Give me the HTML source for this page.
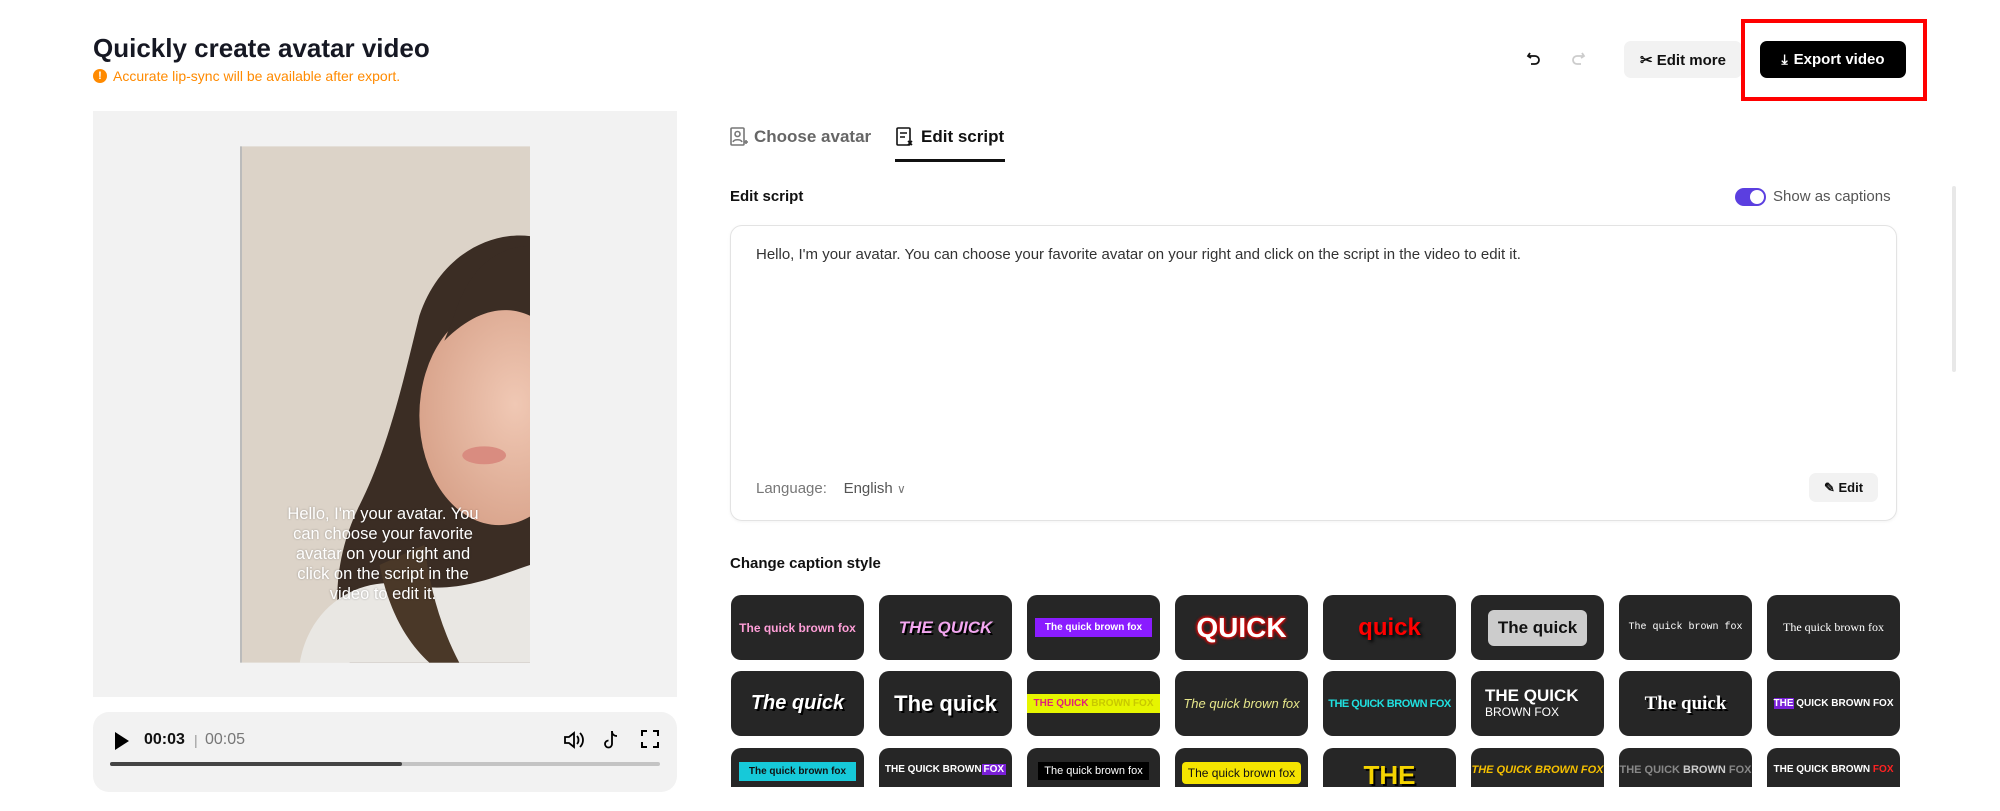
<!DOCTYPE html>
<html><head><meta charset="utf-8"><style>
*{box-sizing:border-box;margin:0;padding:0}
body{width:2000px;height:811px;background:#fff;font-family:"Liberation Sans",sans-serif;color:#111;position:relative;overflow:hidden}
.a{position:absolute}
.tile{position:absolute;width:133px;height:65px;background:#262626;border-radius:10px;display:flex;align-items:center;justify-content:center;color:#fff;font-weight:bold;overflow:hidden;white-space:nowrap}
</style></head><body>
<div class="a" style="left:93px;top:33px;font-size:26px;font-weight:bold;color:#161823">Quickly create avatar video</div>
<div class="a" style="left:93px;top:68px;font-size:14px;color:#ff8a00;display:flex;align-items:center;gap:6px"><span style="width:14px;height:14px;border-radius:50%;background:#ff8a00;color:#fff;font-size:11px;text-align:center;line-height:14px;font-weight:bold">!</span>Accurate lip-sync will be available after export.</div>

<!-- top buttons -->
<svg class="a" style="left:1525px;top:50px" width="18" height="18" viewBox="0 0 18 18" fill="none" stroke="#111" stroke-width="1.8"><path d="M5 3L3 6l3 2"/><path d="M3 6h7a4 4 0 010 8H6"/></svg>
<svg class="a" style="left:1569px;top:50px" width="18" height="18" viewBox="0 0 18 18" fill="none" stroke="#ccc" stroke-width="1.8"><path d="M13 3l2 3-3 2"/><path d="M15 6H8a4 4 0 000 8h4"/></svg>
<div class="a" style="left:1624px;top:41px;width:118px;height:37px;background:#f2f2f2;border-radius:7px;font-size:15px;font-weight:bold;display:flex;align-items:center;justify-content:center;gap:5px">✂ Edit more</div>
<div class="a" style="left:1760px;top:41px;width:146px;height:37px;background:#000;color:#fff;border-radius:7px;font-size:15px;font-weight:bold;display:flex;align-items:center;justify-content:center;gap:6px"><span style="font-size:14px">⤓</span>Export video</div>
<div class="a" style="left:1741px;top:19px;width:186px;height:82px;border:4px solid #f00"></div>

<!-- preview -->
<div class="a" style="left:93px;top:111px;width:584px;height:586px;background:#f2f2f2"></div>
<svg class="a" style="left:240px;top:146px" width="290" height="517" viewBox="0 0 291 518">
<defs><radialGradient id="f" cx="0.6" cy="0.45" r="0.6"><stop offset="0" stop-color="#f0c8b4"/><stop offset="1" stop-color="#d9a48c"/></radialGradient></defs>
<rect width="291" height="518" fill="#dcd3c8"/>
<path d="M291 90 C250 85 200 110 180 170 C165 230 150 300 120 360 C95 410 90 470 110 518 L291 518Z" fill="#3b2d24"/>
<ellipse cx="260" cy="270" rx="80" ry="110" fill="url(#f)"/>
<path d="M291 100 C260 100 230 120 215 170 L205 195 C240 160 270 160 291 170Z" fill="#3b2d24"/>
<ellipse cx="245" cy="310" rx="22" ry="9" fill="#d98c80"/>
<path d="M60 518 C70 460 120 430 170 440 C220 450 260 430 291 420 L291 518Z" fill="#e9e7e3"/>
<path d="M140 420 C150 470 170 500 190 518 L220 518 C200 480 190 440 185 400Z" fill="#4a3828"/>
<rect x="0" y="0" width="2" height="518" fill="#bbb"/>
</svg>
<div class="a" style="left:280px;top:504px;width:206px;text-align:center;color:#fff;font-size:16.5px;line-height:20px;text-shadow:0 0 2px rgba(0,0,0,.3)">Hello, I'm your avatar. You can choose your favorite avatar on your right and click on the script in the video to edit it.</div>

<!-- player -->
<div class="a" style="left:93px;top:712px;width:584px;height:80px;background:#f2f2f2;border-radius:16px"></div>
<svg class="a" style="left:113px;top:731px" width="18" height="20"><path d="M2 1L16 10 2 19Z" fill="#000"/></svg>
<div class="a" style="left:144px;top:731px;font-size:16px;font-weight:bold">00:03</div>
<div class="a" style="left:194px;top:732px;font-size:14px;color:#999">|</div>
<div class="a" style="left:205px;top:731px;font-size:16px;color:#777">00:05</div>
<svg class="a" style="left:562px;top:729px" width="22" height="22" viewBox="0 0 22 22" fill="none" stroke="#000" stroke-width="1.8"><path d="M3 8h4l5-4v14l-5-4H3z"/><path d="M15 7c2 2 2 6 0 8M18 4c4 4 4 10 0 14"/></svg>
<svg class="a" style="left:601px;top:729px" width="22" height="22" viewBox="0 0 22 22" fill="none" stroke="#000" stroke-width="1.8"><path d="M11 2v13a3.5 3.5 0 11-3.5-3.5"/><path d="M11 2c0 3 2 5 5 5"/></svg>
<svg class="a" style="left:640px;top:729px" width="20" height="20" viewBox="0 0 20 20" fill="none" stroke="#000" stroke-width="2"><path d="M2 7V2h5M13 2h5v5M18 13v5h-5M7 18H2v-5"/></svg>
<div class="a" style="left:110px;top:762px;width:550px;height:4px;background:#c4c4c4;border-radius:2px"></div>
<div class="a" style="left:110px;top:762px;width:292px;height:4px;background:#444;border-radius:2px"></div>

<!-- tabs -->
<svg class="a" style="left:730px;top:127px" width="18" height="20" viewBox="0 0 18 20" fill="none" stroke="#777" stroke-width="1.6"><rect x="1" y="1" width="13" height="17" rx="1"/><circle cx="7.5" cy="7" r="2.5"/><path d="M3 15c1-3 8-3 9 0M14 15h4M16 13v4"/></svg>
<div class="a" style="left:754px;top:127px;font-size:17px;color:#666;font-weight:bold">Choose avatar</div>
<svg class="a" style="left:896px;top:127px" width="18" height="20" viewBox="0 0 18 20" fill="none" stroke="#111" stroke-width="1.6"><rect x="1" y="1" width="13" height="17" rx="1"/><path d="M4 6h7M4 10h5M12 14l4 4M16 14l-4 4"/></svg>
<div class="a" style="left:921px;top:127px;font-size:17px;font-weight:bold">Edit script</div>
<div class="a" style="left:895px;top:159px;width:110px;height:3px;background:#111"></div>

<div class="a" style="left:730px;top:188px;font-size:15px;font-weight:bold">Edit script</div>
<div class="a" style="left:1735px;top:188px;width:31px;height:18px;background:#5b3fe0;border-radius:9px"><div style="position:absolute;right:2px;top:2px;width:14px;height:14px;background:#fff;border-radius:50%"></div></div>
<div class="a" style="left:1773px;top:188px;font-size:15px;color:#555">Show as captions</div>

<div class="a" style="left:730px;top:225px;width:1167px;height:296px;border:1px solid #e3e3e3;border-radius:12px;box-shadow:0 1px 3px rgba(0,0,0,.05)"></div>
<div class="a" style="left:756px;top:246px;font-size:15px;color:#333">Hello, I'm your avatar. You can choose your favorite avatar on your right and click on the script in the video to edit it.</div>
<div class="a" style="left:756px;top:480px;font-size:15px;color:#777">Language:&nbsp;&nbsp;&nbsp; <span style="color:#555">English</span> <span style="font-size:12px">∨</span></div>
<div class="a" style="left:1809px;top:473px;width:69px;height:29px;background:#f2f2f2;border-radius:7px;font-size:13px;font-weight:bold;display:flex;align-items:center;justify-content:center">✎ Edit</div>
<div class="a" style="left:1952px;top:186px;width:4px;height:186px;background:#e8e8e8;border-radius:2px"></div>

<div class="a" style="left:730px;top:555px;font-size:15px;font-weight:bold">Change caption style</div>

<div class="a" style="left:0;top:0;width:2000px;height:787px;overflow:hidden">
<div class="tile" style="left:731px;top:595px;font-size:12px;color:#ff9fd8">The quick brown fox</div>
<div class="tile" style="left:879px;top:595px;font-size:17px;font-style:italic;color:#f3a6f0;text-shadow:2px 2px 0 #000">THE QUICK</div>
<div class="tile" style="left:1027px;top:595px"><span style="background:#8a1cff;font-size:10px;padding:4px 10px">The quick brown fox</span></div>
<div class="tile" style="left:1175px;top:595px;font-size:28px;color:#fff;text-shadow:0 0 3px #e00,0 0 3px #e00,0 0 3px #e00">QUICK</div>
<div class="tile" style="left:1323px;top:595px;font-size:24px;color:#f00;text-shadow:2px 2px 3px #000">quick</div>
<div class="tile" style="left:1471px;top:595px"><span style="background:#ccc;color:#111;font-size:17px;padding:8px 10px;border-radius:6px">The quick</span></div>
<div class="tile" style="left:1619px;top:595px;font-size:10px;font-family:'Liberation Mono',monospace;font-weight:normal">The quick brown fox</div>
<div class="tile" style="left:1767px;top:595px;font-size:12px;font-family:'Liberation Serif',serif;font-weight:normal">The quick brown fox</div>

<div class="tile" style="left:731px;top:671px;font-size:20px;font-style:italic;text-shadow:2px 2px 0 #000">The quick</div>
<div class="tile" style="left:879px;top:671px;font-size:22px;text-shadow:2px 2px 0 #000">The quick</div>
<div class="tile" style="left:1027px;top:671px"><span style="background:#e6f500;color:#e0207a;font-size:10px;padding:4px 8px">THE QUICK <span style="color:#c8c800">BROWN FOX</span></span></div>
<div class="tile" style="left:1175px;top:671px;font-size:13px;font-style:italic;font-weight:normal;color:#e6e68a">The quick brown fox</div>
<div class="tile" style="left:1323px;top:671px;font-size:11px;color:#20e0e0;letter-spacing:-.5px">THE QUICK BROWN FOX</div>
<div class="tile" style="left:1471px;top:671px;flex-direction:column;align-items:flex-start;padding-left:14px;font-size:17px;line-height:17px">THE QUICK<span style="font-size:12px;font-weight:normal">BROWN FOX</span></div>
<div class="tile" style="left:1619px;top:671px;font-size:19px;font-family:'Liberation Serif',serif;text-shadow:2px 2px 0 #000">The quick</div>
<div class="tile" style="left:1767px;top:671px;font-size:10px"><span style="background:#7a1fd8">THE</span>&nbsp;QUICK BROWN FOX</div>

<div class="tile" style="left:731px;top:748px;align-items:flex-start;padding-top:14px"><span style="background:#16c9d9;color:#111;font-size:10px;padding:4px 10px">The quick brown fox</span></div>
<div class="tile" style="left:879px;top:748px;align-items:flex-start;padding-top:16px;font-size:10px">THE QUICK BROWN <span style="background:#7a1fd8;padding:0 2px">FOX</span></div>
<div class="tile" style="left:1027px;top:748px;align-items:flex-start;padding-top:14px"><span style="background:#000;font-size:11px;padding:3px 6px;font-weight:normal">The quick brown fox</span></div>
<div class="tile" style="left:1175px;top:748px;align-items:flex-start;padding-top:14px"><span style="background:#f5e400;color:#111;font-size:12px;padding:4px 6px;border-radius:4px;font-weight:normal">The quick brown fox</span></div>
<div class="tile" style="left:1323px;top:748px;align-items:flex-start;padding-top:12px;font-size:26px;color:#f5d400;text-shadow:2px 2px 0 #000">THE</div>
<div class="tile" style="left:1471px;top:748px;align-items:flex-start;padding-top:16px;font-size:11px;font-style:italic;color:#f5c000">THE QUICK BROWN FOX</div>
<div class="tile" style="left:1619px;top:748px;align-items:flex-start;padding-top:16px;font-size:11px;color:#888">THE QUICK <span style="color:#ccc">&nbsp;BROWN&nbsp;</span>FOX</div>
<div class="tile" style="left:1767px;top:748px;align-items:flex-start;padding-top:16px;font-size:10px">THE QUICK BROWN <span style="color:#f22">&nbsp;FOX</span></div>
</div>
</body></html>
